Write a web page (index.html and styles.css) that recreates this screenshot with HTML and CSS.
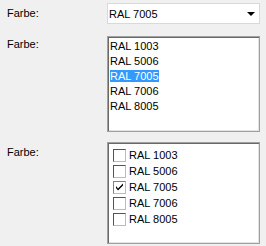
FILE: index.html
```html
<!DOCTYPE html>
<html lang="de">
<head>
    <meta charset="UTF-8">
    <title>Farbe</title>
    <link rel="stylesheet" href="styles.css">
</head>
<body>
    <div class="form">
        <div class="row row-combo">
            <div class="label">Farbe:</div>
            <div class="combo">
                <span class="combo-text">RAL 7005</span>
                <span class="arrow"></span>
            </div>
        </div>
        <div class="row row-list">
            <div class="label">Farbe:</div>
            <div class="listbox">
                <div class="item">RAL 1003</div>
                <div class="item">RAL 5006</div>
                <div class="item"><span class="selected">RAL 7005</span></div>
                <div class="item">RAL 7006</div>
                <div class="item">RAL 8005</div>
            </div>
        </div>
        <div class="row row-check">
            <div class="label">Farbe:</div>
            <div class="listbox checklist">
                <div class="check-item"><span class="box"></span>RAL 1003</div>
                <div class="check-item"><span class="box"></span>RAL 5006</div>
                <div class="check-item"><span class="box checked">
                    <svg width="11" height="11" viewBox="0 0 11 11"><path d="M2 4 L4 6.5 L9 1.5 L9 3.5 L4 8.5 L2 6 Z" fill="#000"/></svg>
                </span>RAL 7005</div>
                <div class="check-item"><span class="box"></span>RAL 7006</div>
                <div class="check-item"><span class="box"></span>RAL 8005</div>
            </div>
        </div>
    </div>
</body>
</html>
```

FILE: styles.css
```css
body {
    margin: 0;
    background: #f0f0f0;
    font-family: "Liberation Sans", Arial, sans-serif;
    font-size: 11px;
    color: #000;
}
.form {
    display: flex;
    flex-direction: column;
    padding-top: 3px;
}
.row {
    display: grid;
    grid-template-columns: 107px 153px;
}
.label {
    padding-left: 7px;
}
.row-combo .label {
    padding-top: 4px;
}
.row-list {
    margin-top: 12px;
}
.row-list .label {
    padding-top: 2px;
}
.row-check {
    margin-top: 10px;
}
.row-check .label {
    padding-top: 4px;
}
.combo {
    height: 19px;
    background: #fff;
    border: 1px solid #d9d9d9;
    display: flex;
    align-items: center;
    justify-content: space-between;
    padding-left: 1px;
    padding-right: 4px;
}
.arrow {
    width: 0;
    height: 0;
    border-left: 4px solid transparent;
    border-right: 4px solid transparent;
    border-top: 4px solid #000;
}
.listbox {
    height: 92px;
    background: #fff;
    border: 1px solid #a0a0a0;
    box-shadow: inset 1px 1px #696969, inset -1px -1px #e3e3e3;
    padding: 2px 1px 0 2px;
}
.item {
    height: 15px;
    line-height: 15px;
}
.selected {
    background: #3399ff;
    color: #fff;
}
.checklist {
    height: 96px;
    padding-top: 4px;
}
.check-item {
    height: 16px;
    display: flex;
    align-items: center;
    gap: 3px;
    padding-left: 3px;
}
.box {
    width: 11px;
    height: 11px;
    background: #fff;
    border: 1px solid;
    border-color: #555 #bbb #bbb #555;
    display: flex;
    align-items: center;
    justify-content: center;
}
.box.checked {
    border-color: #808080 #bbb #bbb #808080;
}
```
